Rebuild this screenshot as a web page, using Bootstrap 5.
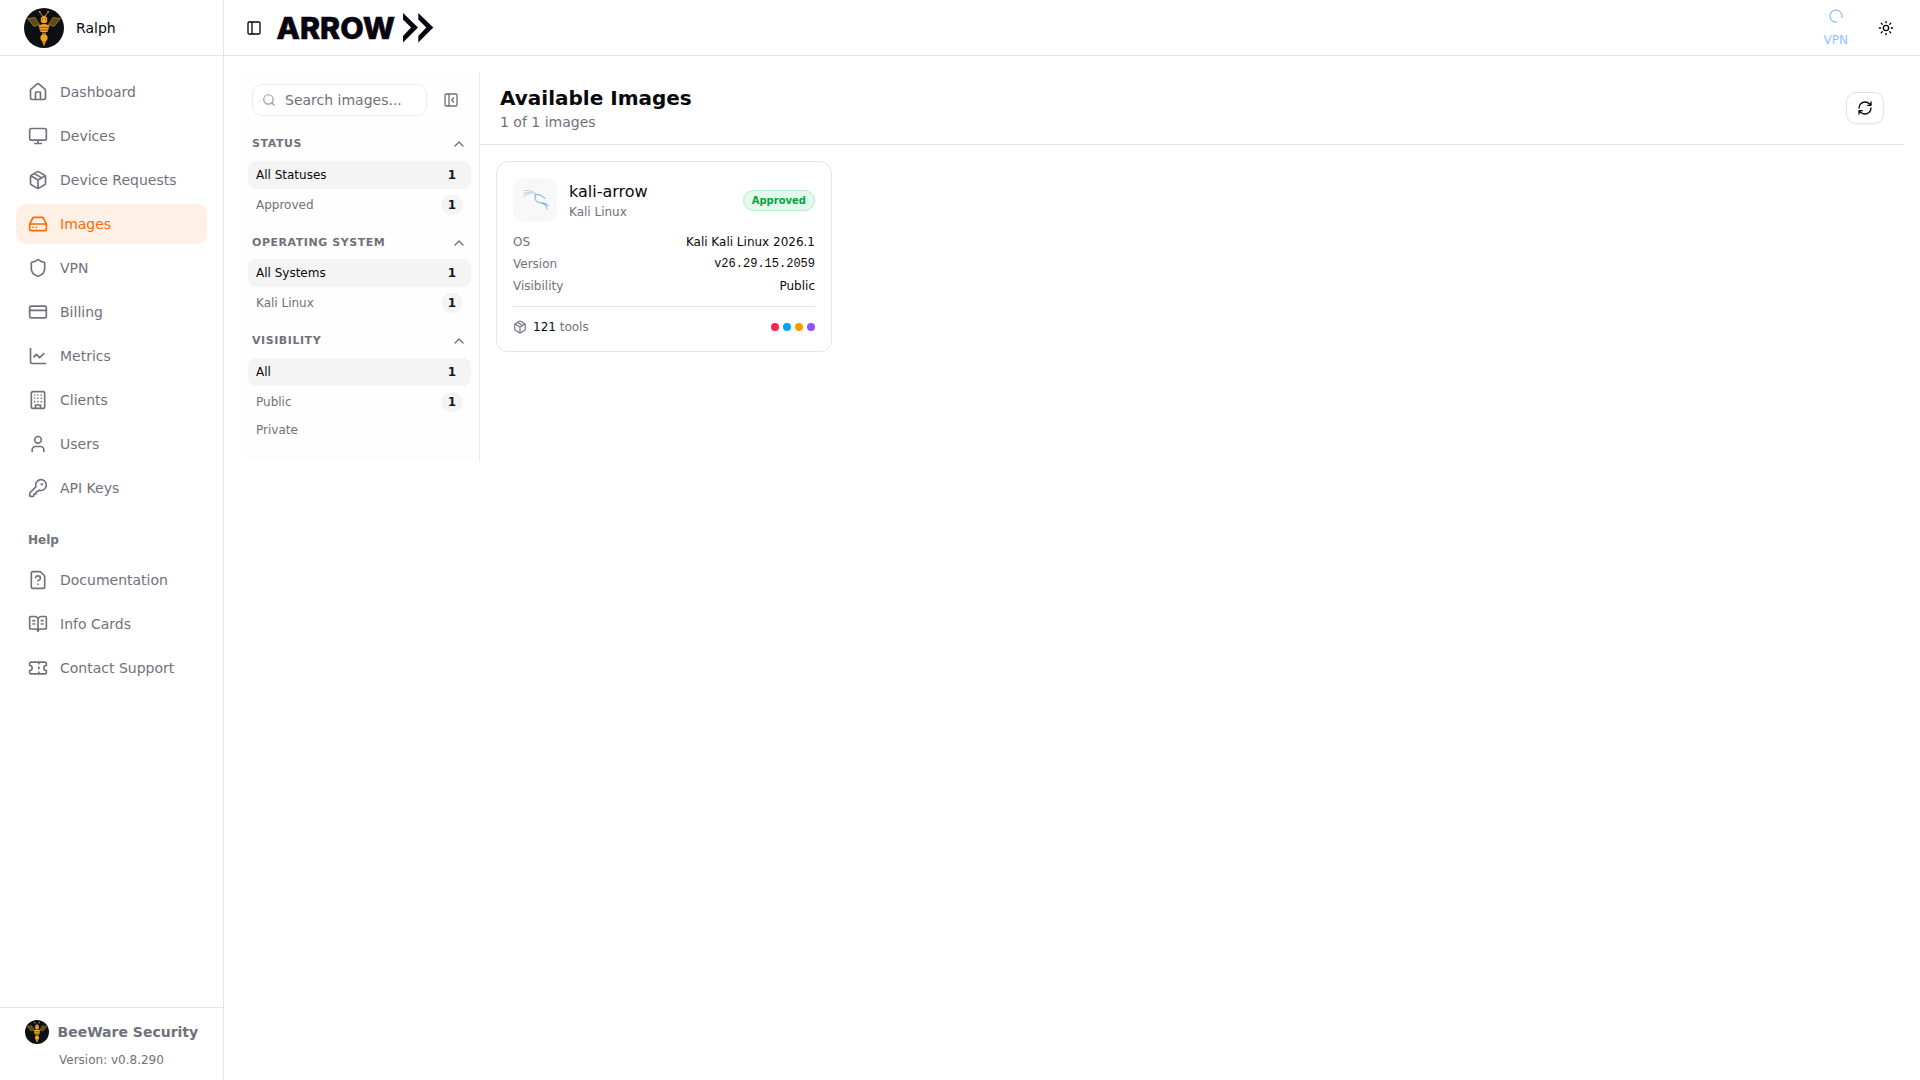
<!DOCTYPE html>
<html lang="en">
<head>
<meta charset="utf-8">
<meta name="viewport" content="width=device-width, initial-scale=1">
<title>Arrow - Available Images</title>
<link href="https://cdn.jsdelivr.net/npm/bootstrap@5.3.0/dist/css/bootstrap.min.css" rel="stylesheet">
<style>
:root{--ink:#09090b;--muted:#71717b;--line:#e4e4e7;--accent:#ff6900}
body{font-family:"DejaVu Sans",sans-serif;font-size:14px;line-height:20px;color:var(--ink);background:#fff}
a{text-decoration:none;color:inherit}
svg{display:block;flex:none}
.ico{fill:none;stroke:currentColor;stroke-width:2;stroke-linecap:round;stroke-linejoin:round}
.t-muted{color:var(--muted)}
.fs-12{font-size:12px;line-height:16px}
.sidebar{width:224px;border-right:1px solid var(--line)}
.brand{height:56px;padding:0 24px;gap:12px;border-bottom:1px solid var(--line)}
.side-menu{padding:16px 16px 0;gap:4px}
.side-menu .nav-link{height:40px;padding:0 12px;gap:12px;border-radius:10px;color:var(--muted);font-size:14px}
.side-menu .nav-link.active{background:#fff0e6;color:var(--accent)}
.help-label{font-size:12px;line-height:16px;font-weight:700;color:var(--muted);padding:20px 12px 8px}
.side-foot{height:73px;border-top:1px solid var(--line);padding:12px 24px 0 25px}
.foot-name{gap:8.500px}
.version-line{margin:8px 0 0 34px}
.topbar{height:56px;border-bottom:1px solid var(--line);padding:0 26px 0 22px}
.arrow-logo{margin-left:4px;overflow:visible}
.vpn{color:#8ec5ff;gap:8px}
.sun{margin-left:30px}
.content-area{padding:16px 16px 0 17px}
.filters{width:239px;height:389.500px;background:#fefefe;border-right:1px solid #ececee;padding:12px 8px 0 7px}
.search-box{width:175px;height:32px;border:1px solid #ececee;border-radius:10px;background:#fff;padding:0 9px;gap:9px;margin-left:4px}
.search-box input{font-size:14px;color:var(--muted);width:120px;outline:0;padding:0;background:transparent}
.search-box input::placeholder{color:var(--muted);opacity:1}
.filter-group{padding-top:20px}
.filter-group + .filter-group{padding-top:15.600px}
.group-head{height:16.500px;font-size:11px;letter-spacing:.55px;font-weight:700;color:var(--muted);padding:0 4px}
.opts{gap:2px;margin-top:8.400px}
.opt{height:28px;border-radius:8px;padding:0 8px;font-size:12px;color:var(--muted)}
.opt.short{height:24px}
.opt.on{background:#f4f4f5;color:var(--ink)}
.count{width:22px;height:20px;border-radius:10px;background:#f4f4f5;color:#18181b;font-size:12px;font-weight:700}
.page-head{height:73px;border-bottom:1px solid var(--line);padding:0 20px}
.page-head h1{font-size:20px;line-height:28px;font-weight:700}
.refresh{width:38px;height:32px;border:1px solid var(--line);border-radius:10px;background:#fff;color:var(--ink);box-shadow:0 1px 2px rgba(0,0,0,.05);margin-top:-1px}
.image-card{width:336px;height:191px;border:1px solid var(--line);border-radius:12px;margin:16px;padding:16px}
.os-tile{width:44px;height:44px;border-radius:10px;background:#f8f8f8}
.names{margin-left:12px}
.card-name{font-size:16px;line-height:24px}
.status{height:21px;padding:1px 8px 0;border:1px solid #b3edc7;border-radius:11px;background:#e5f8ec;color:#00a63e;font-size:10px;font-weight:700}
.facts{gap:6px;margin-top:12px}
.ver{font-family:"Liberation Mono",monospace}
.tools{border-top:1px solid var(--line);margin-top:12px;padding-top:12px;gap:6px}
.num{color:var(--ink)}
.dot{width:8px;height:8px;border-radius:50%}
</style>
<script src="https://cdn.jsdelivr.net/npm/bootstrap@5.3.0/dist/js/bootstrap.bundle.min.js"></script>
</head>
<body>
<svg width="0" height="0" class="position-absolute">
<defs>
<symbol id="bee" viewBox="0 0 40 40">
<circle cx="20" cy="20" r="20" fill="#0c1015"/>
<path d="M18.300 8 15.800 3.800M21.200 8 24 3.800" stroke="#d98f20" stroke-width=".9" fill="none"/>
<circle cx="15.600" cy="3.800" r=".9" fill="#e9a027"/><circle cx="24.200" cy="3.800" r=".9" fill="#e9a027"/>
<path d="M3.500 10.500 11 9.500 15.500 16.500 10 18.500ZM36.500 10.500 29 9.500 24.500 16.500 30 18.500Z" fill="#5e4b1c" stroke="#a47b24" stroke-width=".8"/>
<path d="M16.800 10q3.200-5 6.400 0v4q-3.200 2.500-6.400 0Z" fill="#efa023"/>
<path d="M14.500 17.500q5.500-3 11 0l-2 6.500h-7Z" fill="#f5a623"/>
<path d="M15 19.300h10M15.800 22h8.400" stroke="#8a5512" stroke-width="1"/>
<path d="M18 24.500h4v2h-4Z" fill="#b06c14"/>
<ellipse cx="20" cy="29.800" rx="3.600" ry="3.600" fill="#f6a21c"/>
<path d="M17.800 33h4.400L20 38.500Z" fill="#d98518"/>
<circle cx="18.300" cy="11" r=".6" fill="#4c300a"/><circle cx="21.700" cy="11" r=".6" fill="#4c300a"/>
</symbol>
<symbol id="package" viewBox="0 0 24 24"><path d="M11 21.730a2 2 0 0 0 2 0l7-4A2 2 0 0 0 21 16V8a2 2 0 0 0-1-1.730l-7-4a2 2 0 0 0-2 0l-7 4A2 2 0 0 0 3 8v8a2 2 0 0 0 1 1.730zM12 22V12M3.290 7 12 12l8.710-5M7.500 4.270l9 5.150"/></symbol>
<symbol id="up" viewBox="0 0 24 24"><path d="m18 15-6-6-6 6"/></symbol>
</defs>
</svg>
<div class="d-flex vh-100">
<aside class="sidebar d-flex flex-column flex-shrink-0">
  <div class="brand d-flex align-items-center flex-shrink-0">
    <svg width="40" height="40"><use href="#bee"/></svg><span>Ralph</span>
  </div>
  <nav class="side-menu nav flex-column flex-nowrap flex-grow-1">
    <a class="nav-link d-flex align-items-center" href="#"><svg class="ico" width="20" height="20" viewBox="0 0 24 24"><path d="M15 21v-8a1 1 0 0 0-1-1h-4a1 1 0 0 0-1 1v8"/><path d="M3 10a2 2 0 0 1 .709-1.528l7-5.999a2 2 0 0 1 2.582 0l7 5.999A2 2 0 0 1 21 10v9a2 2 0 0 1-2 2H5a2 2 0 0 1-2-2z"/></svg>Dashboard</a>
    <a class="nav-link d-flex align-items-center" href="#"><svg class="ico" width="20" height="20" viewBox="0 0 24 24"><rect width="20" height="14" x="2" y="3" rx="2"/><path d="M8 21h8M12 17v4"/></svg>Devices</a>
    <a class="nav-link d-flex align-items-center" href="#"><svg class="ico" width="20" height="20"><use href="#package"/></svg>Device Requests</a>
    <a class="nav-link active d-flex align-items-center" href="#"><svg class="ico" width="20" height="20" viewBox="0 0 24 24"><path d="M22 12H2M5.450 5.110 2 12v6a2 2 0 0 0 2 2h16a2 2 0 0 0 2-2v-6l-3.450-6.890A2 2 0 0 0 16.760 4H7.240a2 2 0 0 0-1.790 1.110zM6 16h.010M10 16h.010"/></svg>Images</a>
    <a class="nav-link d-flex align-items-center" href="#"><svg class="ico" width="20" height="20" viewBox="0 0 24 24"><path d="M20 13c0 5-3.500 7.500-7.660 8.950a1 1 0 0 1-.67-.01C7.500 20.500 4 18 4 13V6a1 1 0 0 1 1-1c2 0 4.500-1.200 6.240-2.720a1.170 1.170 0 0 1 1.520 0C14.510 3.810 17 5 19 5a1 1 0 0 1 1 1z"/></svg>VPN</a>
    <a class="nav-link d-flex align-items-center" href="#"><svg class="ico" width="20" height="20" viewBox="0 0 24 24"><rect width="20" height="14" x="2" y="5" rx="2"/><path d="M2 10h20"/></svg>Billing</a>
    <a class="nav-link d-flex align-items-center" href="#"><svg class="ico" width="20" height="20" viewBox="0 0 24 24"><path d="M3 3v16a2 2 0 0 0 2 2h16M19 9l-5 5-4-4-3 3"/></svg>Metrics</a>
    <a class="nav-link d-flex align-items-center" href="#"><svg class="ico" width="20" height="20" viewBox="0 0 24 24"><rect width="16" height="20" x="4" y="2" rx="2"/><path d="M9 22v-4h6v4M8 6h.010M16 6h.010M12 6h.010M12 10h.010M12 14h.010M16 10h.010M16 14h.010M8 10h.010M8 14h.010"/></svg>Clients</a>
    <a class="nav-link d-flex align-items-center" href="#"><svg class="ico" width="20" height="20" viewBox="0 0 24 24"><path d="M19 21v-2a4 4 0 0 0-4-4H9a4 4 0 0 0-4 4v2"/><circle cx="12" cy="7" r="4"/></svg>Users</a>
    <a class="nav-link d-flex align-items-center" href="#"><svg class="ico" width="20" height="20" viewBox="0 0 24 24"><path d="M2.586 17.414A2 2 0 0 0 2 18.828V21a1 1 0 0 0 1 1h3a1 1 0 0 0 1-1v-1a1 1 0 0 1 1-1h1a1 1 0 0 0 1-1v-1a1 1 0 0 1 1-1h.172a2 2 0 0 0 1.414-.586l.814-.814a6.500 6.500 0 1 0-4-4z"/><circle cx="16.500" cy="7.500" r=".5" fill="currentColor"/></svg>API Keys</a>
    <div class="help-label">Help</div>
    <a class="nav-link d-flex align-items-center" href="#"><svg class="ico" width="20" height="20" viewBox="0 0 24 24"><path d="M6 22a2 2 0 0 1-2-2V4a2 2 0 0 1 2-2h8a2.400 2.400 0 0 1 1.704.706l3.588 3.588A2.400 2.400 0 0 1 20 8v12a2 2 0 0 1-2 2zM12 17h.010M9.100 9a3 3 0 0 1 5.820 1c0 2-3 3-3 3"/></svg>Documentation</a>
    <a class="nav-link d-flex align-items-center" href="#"><svg class="ico" width="20" height="20" viewBox="0 0 24 24"><path d="M12 7v14M16 12h2M16 8h2M6 12h2M6 8h2M3 18a1 1 0 0 1-1-1V4a1 1 0 0 1 1-1h5a4 4 0 0 1 4 4 4 4 0 0 1 4-4h5a1 1 0 0 1 1 1v13a1 1 0 0 1-1 1h-6a3 3 0 0 0-3 3 3 3 0 0 0-3-3z"/></svg>Info Cards</a>
    <a class="nav-link d-flex align-items-center" href="#"><svg class="ico" width="20" height="20" viewBox="0 0 24 24"><path d="M2 9a3 3 0 0 1 0 6v2a2 2 0 0 0 2 2h16a2 2 0 0 0 2-2v-2a3 3 0 0 1 0-6V7a2 2 0 0 0-2-2H4a2 2 0 0 0-2 2ZM13 5v2M13 17v2M13 11v2"/></svg>Contact Support</a>
  </nav>
  <div class="side-foot t-muted flex-shrink-0">
    <div class="foot-name d-flex align-items-center"><svg width="24" height="24"><use href="#bee"/></svg><b class="text-nowrap">BeeWare Security</b></div>
    <div class="fs-12 version-line">Version: v0.8.290</div>
  </div>
</aside>
<div class="flex-grow-1">
  <header class="topbar d-flex align-items-center">
    <svg class="ico" width="16" height="16" viewBox="0 0 24 24"><rect width="18" height="18" x="3" y="3" rx="2"/><path d="M9 3v18"/></svg>
    <svg class="arrow-logo" width="180" height="48" viewBox="-10 -8 180 48" fill="#08040f">
      <text x=".5" y="26.500" font-family="Inter, sans-serif" font-weight="800" font-size="29.500" textLength="118.500" lengthAdjust="spacingAndGlyphs" stroke="#08040f" stroke-width=".6">ARROW</text>
      <path d="M127 1 142 15.500 127 30.500V24L135 15.500 127 7.500ZM142.300 1 157.300 15.500 142.300 30.500V24L150.300 15.500 142.300 7.500Z"/>
    </svg>
    <div class="vpn d-flex flex-column align-items-center ms-auto fs-12"><svg class="ico" width="16" height="16" viewBox="0 0 24 24"><path d="M21 12a9 9 0 1 1-6.219-8.560" transform="rotate(85 12 12)"/></svg><span>VPN</span></div>
    <svg class="ico sun" width="16" height="16" viewBox="0 0 24 24"><circle cx="12" cy="12" r="4"/><path d="M12 2v2M12 20v2M4.930 4.930l1.410 1.410M17.660 17.660l1.410 1.410M2 12h2M20 12h2M6.340 17.660l-1.410 1.410M19.070 4.930l-1.410 1.410"/></svg>
  </header>
  <main class="content-area d-flex align-items-start">
    <section class="filters flex-shrink-0">
      <div class="d-flex align-items-center t-muted">
        <label class="search-box d-flex align-items-center"><svg class="ico" width="14" height="14" viewBox="0 0 24 24" opacity=".7"><path d="m21 21-4.340-4.340"/><circle cx="11" cy="11" r="8"/></svg><input class="border-0" placeholder="Search images..."></label>
        <svg class="ico ms-3" width="16" height="16" viewBox="0 0 24 24"><rect width="18" height="18" x="3" y="3" rx="2"/><path d="M9 3v18M16 15l-3-3 3-3"/></svg>
      </div>
      <div class="filter-group">
        <div class="group-head d-flex align-items-center justify-content-between">STATUS<svg class="ico" width="16" height="16"><use href="#up"/></svg></div>
        <div class="opts d-flex flex-column">
          <div class="opt on d-flex align-items-center justify-content-between">All Statuses<span class="count d-flex align-items-center justify-content-center">1</span></div>
          <div class="opt d-flex align-items-center justify-content-between">Approved<span class="count d-flex align-items-center justify-content-center">1</span></div>
        </div>
      </div>
      <div class="filter-group">
        <div class="group-head d-flex align-items-center justify-content-between">OPERATING SYSTEM<svg class="ico" width="16" height="16"><use href="#up"/></svg></div>
        <div class="opts d-flex flex-column">
          <div class="opt on d-flex align-items-center justify-content-between">All Systems<span class="count d-flex align-items-center justify-content-center">1</span></div>
          <div class="opt d-flex align-items-center justify-content-between">Kali Linux<span class="count d-flex align-items-center justify-content-center">1</span></div>
        </div>
      </div>
      <div class="filter-group">
        <div class="group-head d-flex align-items-center justify-content-between">VISIBILITY<svg class="ico" width="16" height="16"><use href="#up"/></svg></div>
        <div class="opts d-flex flex-column">
          <div class="opt on d-flex align-items-center justify-content-between">All<span class="count d-flex align-items-center justify-content-center">1</span></div>
          <div class="opt d-flex align-items-center justify-content-between">Public<span class="count d-flex align-items-center justify-content-center">1</span></div>
          <div class="opt short d-flex align-items-center">Private</div>
        </div>
      </div>
    </section>
    <section class="flex-grow-1">
      <div class="page-head d-flex align-items-center justify-content-between">
        <div><h1 class="mb-0">Available Images</h1><div class="t-muted">1 of 1 images</div></div>
        <button class="refresh d-flex align-items-center justify-content-center p-0" aria-label="Refresh"><svg class="ico" width="16" height="16" viewBox="0 0 24 24"><path d="M3 12a9 9 0 0 1 9-9 9.750 9.750 0 0 1 6.740 2.740L21 8M21 3v5h-5M21 12a9 9 0 0 1-9 9 9.750 9.750 0 0 1-6.740-2.740L3 16M8 16H3v5"/></svg></button>
      </div>
      <article class="image-card">
        <div class="d-flex align-items-center">
          <div class="os-tile d-flex align-items-center justify-content-center">
            <svg width="28" height="28" viewBox="0 0 28 28" fill="none" stroke="#7fb3d5" stroke-linecap="round"><path d="M3 4.500Q10 4 15 7.500M2.500 7.500Q9 5 15 8.500M2 10.500Q5 8.300 8.500 7.800" stroke-width=".8" stroke="#a3c9e0"/><path d="M14.500 8.500Q20 8 24 12.500M14.500 9Q12.500 15 18 16.500 25.500 17.500 26 23M18 16.500Q24 16.500 27 19.500" stroke-width="1.100"/></svg>
          </div>
          <div class="names"><div class="card-name">kali-arrow</div><div class="fs-12 t-muted">Kali Linux</div></div>
          <span class="status d-flex align-items-center ms-auto">Approved</span>
        </div>
        <div class="facts d-flex flex-column fs-12">
          <div class="d-flex justify-content-between"><span class="t-muted">OS</span><span>Kali Kali Linux 2026.1</span></div>
          <div class="d-flex justify-content-between"><span class="t-muted">Version</span><span class="ver">v26.29.15.2059</span></div>
          <div class="d-flex justify-content-between"><span class="t-muted">Visibility</span><span>Public</span></div>
        </div>
        <div class="tools d-flex align-items-center fs-12 t-muted">
          <svg class="ico" width="14" height="14"><use href="#package"/></svg><span><span class="num">121</span> tools</span>
          <div class="d-flex gap-1 ms-auto"><i class="dot" style="background:#ff2056"></i><i class="dot" style="background:#00a6f4"></i><i class="dot" style="background:#fe9a00"></i><i class="dot" style="background:#8e51ff"></i></div>
        </div>
      </article>
    </section>
  </main>
</div>
</div>
</body>
</html>
